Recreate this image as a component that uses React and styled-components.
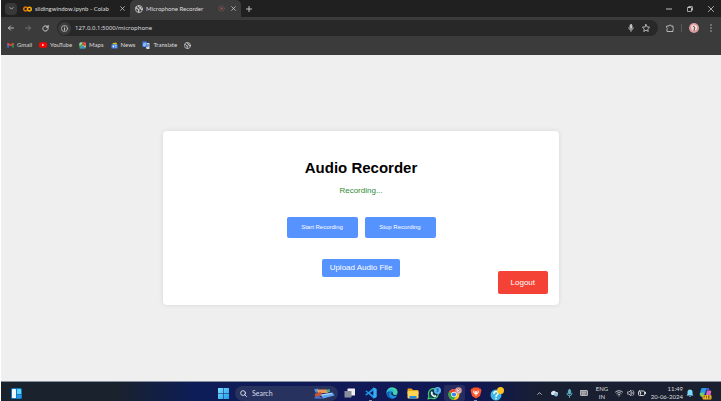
import React from "react";
import styled, { createGlobalStyle } from "styled-components";

const Global = createGlobalStyle`
  * { box-sizing: border-box; }
  body { margin: 0; background: #fff; }
  button, input { font: inherit; color: inherit; border: 0; padding: 0; margin: 0; background: none; }
  h1, p { margin: 0; }
  svg { display: block; flex: none; }
`;

const Screen = styled.div`
  min-height: 100vh;
  display: flex;
  flex-direction: column;
  border-left: 1px solid #fff;
  font-family: Lato, "Open Sans", sans-serif;
  font-size: 6px;
  line-height: 8px;
  color: #dcdcdc;
`;

const TabStrip = styled.header`
  display: flex;
  align-items: center;
  height: 17px;
  background: #202020;
`;

const IconButton = styled.button`
  display: flex;
  align-items: center;
  justify-content: center;
  flex: none;
  width: ${(p) => p.$w || 16}px;
  height: ${(p) => p.$h || 16}px;
  border-radius: ${(p) => p.$radius || 0}px;
  background: ${(p) => p.$bg || "transparent"};
`;

const TabSearch = styled(IconButton)`
  margin: 0 6px 0 4px;
`;

const Tab = styled.div`
  display: flex;
  align-items: center;
  gap: 3px;
  width: ${(p) => p.$w}px;
  height: 17px;
  padding: 0 3px 0 ${(p) => (p.$active ? 5 : 0)}px;
  border-radius: 5px 5px 0 0;
  background: ${(p) => (p.$active ? "#3b3b3b" : "transparent")};
`;

const TabTitle = styled.span`
  flex: 1;
  white-space: nowrap;
`;

const WindowControls = styled.div`
  display: flex;
  margin-left: auto;
`;

const Toolbar = styled.div`
  display: flex;
  align-items: center;
  height: 22px;
  padding: 0 2px;
  background: #3b3b3b;
`;

const AddressBar = styled.div`
  flex: 1;
  display: flex;
  align-items: center;
  height: 16px;
  margin: 0 4px 0 4px;
  padding: 0 5px 0 1px;
  border-radius: 8px;
  background: #282828;
`;

const AddressInput = styled.input`
  flex: 1;
  min-width: 0;
  margin-left: 4px;
  font-family: "Noto Sans", sans-serif;
  font-size: 6px;
  line-height: 10px;
  outline: none;
`;

const Separator = styled.span`
  width: 1px;
  height: 8px;
  margin: 0 3px;
  background: #5a5a5a;
`;

const Bookmarks = styled.nav`
  display: flex;
  align-items: flex-start;
  gap: 7px;
  height: 16px;
  padding: 2px 6px;
  background: #3b3b3b;
`;

const Bookmark = styled.a`
  display: flex;
  align-items: center;
  gap: 3px;
  height: 8px;
  color: inherit;
  text-decoration: none;
`;

const Page = styled.main`
  flex: 1;
  display: flex;
  align-items: center;
  justify-content: center;
  background: #efefef;
  font-family: "Liberation Sans", Arial, sans-serif;
`;

const Card = styled.section`
  position: relative;
  width: 55%;
  min-width: 260px;
  display: flex;
  flex-direction: column;
  align-items: center;
  padding: 28px 20px;
  border-radius: 4px;
  background: #fff;
  box-shadow: 0 0 5px rgba(0, 0, 0, 0.1);
`;

const Title = styled.h1`
  font-size: 15px;
  line-height: 18px;
  color: #000;
`;

const Status = styled.p`
  margin-top: 9px;
  font-size: 8px;
  line-height: 10px;
  color: #2c8a35;
`;

const RecordActions = styled.div`
  display: flex;
  gap: 7px;
  margin: 21px 0;
`;

const ActionButton = styled.button`
  padding: ${(p) => p.$pad};
  border-radius: 2px;
  font-size: 8px;
  line-height: 9px;
  color: #fff;
  background: ${(p) => (p.$danger ? "#f44236" : "#5793ff")};
`;

const RecordButton = styled(ActionButton)`
  width: 71px;
  padding: 6px 4px;
  font-size: 6px;
`;

const LogoutButton = styled(ActionButton)`
  position: absolute;
  right: 11px;
  bottom: 11px;
`;

const Taskbar = styled.footer`
  display: grid;
  grid-template-columns: 1fr auto 1fr;
  align-items: center;
  height: 20px;
  padding-top: 3px;
  border-top: 1px solid #8791a0;
  background: linear-gradient(90deg, #19222d 0%, #19222d 16%, #0d1d58 27%, #111958 50%, #101752 66%, #181f32 75%, #1b2030 100%);
`;

const Left = styled.div`
  padding-left: 7px;
`;

const Apps = styled.div`
  display: flex;
  align-items: center;
`;

const SearchBox = styled.label`
  display: flex;
  align-items: center;
  width: 103px;
  height: 15px;
  margin: 0 1px 0 4px;
  padding: 0 3px 0 5px;
  border-radius: 8px;
  background: #28325f;
`;

const SearchInput = styled.input`
  flex: 1;
  min-width: 0;
  margin-left: 5px;
  font-size: 7px;
  line-height: 9px;
  outline: none;
  &::placeholder { color: #d5d9e7; opacity: 1; }
`;

const AppButton = styled.button`
  display: flex;
  flex-direction: column;
  align-items: center;
  justify-content: center;
  width: ${(p) => p.$w || 21}px;
  height: 16px;
  padding-top: 2px;
  border-radius: 2px;
  background: ${(p) => (p.$active ? "#262c60" : "transparent")};
  &::after {
    content: "";
    width: ${(p) => (p.$active ? 7 : 3)}px;
    height: 1px;
    margin-top: 1px;
    background: ${(p) => (p.$active ? "#4cc2ff" : p.$running ? "#8e94ac" : "transparent")};
  }
`;

const Tray = styled.div`
  display: flex;
  align-items: center;
  justify-content: flex-end;
  padding-right: 6px;
`;

const Language = styled.button`
  width: 22px;
  text-align: center;
  line-height: 8px;
`;

const Clock = styled.button`
  width: 36px;
  text-align: right;
  line-height: 8px;
  white-space: nowrap;
`;

const TrayGroup = styled.div`
  display: flex;
`;

/* Icons */

function Icon({ size = 8, w, box = "0 0 16 16", stroke = "#d0d0d0", sw = 1.6, children }) {
  return (
    <svg width={w || size} height={size} viewBox={box} fill="none" stroke={stroke} strokeWidth={sw} strokeLinecap="round" strokeLinejoin="round" aria-hidden="true">
      {children}
    </svg>
  );
}

const CloseIcon = ({ size = 5 }) => <Icon size={size} sw={2.4}><path d="M2 2l12 12M14 2L2 14" /></Icon>;

const GlobeIcon = ({ size = 8 }) => (
  <Icon size={size}>
    <circle cx="8" cy="8" r="7" />
    <path d="M2 5l3 3 3 1-1 3 1 3M7 2l1 2 3 1-1 2 4 2" strokeWidth="2.2" />
  </Icon>
);

const ColabIcon = () => (
  <Icon size={6} w={9} box="0 0 24 16" sw={4}>
    <path d="M10 4a5 5 0 1 0 0 8" stroke="#e8710a" />
    <circle cx="17" cy="8" r="5" stroke="#f9ab00" />
  </Icon>
);

const MicIcon = ({ size = 8, color = "#c8c8c8" }) => (
  <Icon size={size} stroke={color}>
    <rect x="6" y="1" width="4" height="8" rx="2" fill={color} />
    <path d="M3.500 7.500a4.500 4.500 0 0 0 9 0M8 12v3" />
  </Icon>
);

const GmailIcon = () => (
  <Icon size={6} w={7} box="0 0 20 16" sw={4}>
    <path d="M3 14V4" stroke="#4285f4" />
    <path d="M17 14V4" stroke="#34a853" />
    <path d="M3 4l7 5 7-5" stroke="#ea4335" />
  </Icon>
);

const YouTubeIcon = () => (
  <Icon size={6} w={8} box="0 0 20 14" stroke="none">
    <rect width="20" height="14" rx="4" fill="#f00" />
    <path d="M8 4v6l5-3z" fill="#fff" />
  </Icon>
);

const MapsIcon = () => (
  <Icon size={7} stroke="none">
    <rect x="1" y="1" width="14" height="14" rx="2" fill="#34a853" />
    <path d="M1 15L15 1v12L9 8z" fill="#e8eaed" />
    <path d="M2 15l6-6 6 6z" fill="#4285f4" />
    <path d="M1 10l8-9H3L1 3z" fill="#a4d3ae" />
    <path d="M12 0a4 4 0 0 1 4 4c0 3-4 6-4 6S8 7 8 4a4 4 0 0 1 4-4z" fill="#ea4335" />
  </Icon>
);

const NewsIcon = () => (
  <Icon size={7} stroke="none">
    <path d="M3 3l9-2 1 5H3z" fill="#34a853" />
    <path d="M5 2h8v5H5z" fill="#fbbc04" />
    <rect x="1" y="5" width="14" height="10" rx="2" fill="#4285f4" />
    <path d="M4 8h3v4H4zM9 8h4v1H9zM9 11h4v1H9z" fill="#fff" />
  </Icon>
);

const TranslateIcon = () => (
  <Icon size={8} stroke="none">
    <path d="M6 4h9v12H9z" fill="#d5dae3" />
    <path d="M1 1h8l3 11H1z" fill="#4285f4" />
    <path d="M8 5.500H5a2 2 0 1 0 2 2H6" fill="none" stroke="#fff" strokeWidth="1.200" />
    <path d="M10 8h5M12.500 7c0 3 1 4 2 5" stroke="#60738e" strokeWidth="1.200" />
  </Icon>
);

const WidgetsIcon = () => (
  <Icon size={11} box="0 0 22 22" stroke="none">
    <rect width="22" height="22" rx="3" fill="#1279c4" />
    <rect x="2" y="2" width="8" height="18" rx="1" fill="#f2f7fb" />
    <rect x="12" y="2" width="8" height="10" rx="1" fill="#62d2fb" />
    <rect x="12" y="14" width="8" height="6" rx="1" fill="#2997e8" />
  </Icon>
);

const WindowsIcon = () => (
  <Icon size={11} box="0 0 22 22" stroke="none">
    <defs>
      <linearGradient id="win" x1="0" y1="0" x2="1" y2="1">
        <stop offset="0" stopColor="#7fdcff" />
        <stop offset="1" stopColor="#1a9cec" />
      </linearGradient>
    </defs>
    <path d="M0 0h10.500v10.500H0zM11.500 0H22v10.500H11.500zM0 11.500h10.500V22H0zM11.500 11.500H22V22H11.500z" fill="url(#win)" />
  </Icon>
);

const SearchArt = () => (
  <Icon size={11} w={22} box="0 0 44 22" stroke="none">
    <path d="M2 3l7-2 3 6-6 3z" fill="#4c92df" />
    <path d="M8 3h20l2 7H10z" fill="#ed9558" />
    <path d="M3 12l12-4 5 7-15 3z" fill="#c5523a" />
    <path d="M15 13l24-4 4 6-23 6z" fill="#62a4f1" />
    <path d="M18 14l19-3" stroke="#b4dcff" strokeWidth="2" />
    <path d="M2 19l9-3 9 5H4z" fill="#4875d7" />
    <path d="M27 4l6-2 1 6-6 1z" fill="#54a88d" />
  </Icon>
);

const TaskViewIcon = () => (
  <Icon size={11} box="0 0 22 22" stroke="none">
    <rect x="7" y="1" width="15" height="14" rx="1" fill="#f0f0f2" />
    <rect x="1" y="6" width="14" height="13" rx="1" fill="#8a8e9c" />
  </Icon>
);

const VSCodeIcon = () => (
  <Icon size={12} box="0 0 24 24" stroke="none">
    <path d="M17 1l6 3v16l-6 3L7 14l-4 3-2-1v-2l4-2-4-3V8l2-1 4 3zM17 7l-7 5 7 5z" fill="#1f94e0" fillRule="evenodd" />
    <path d="M17 1l6 3v16l-6 3z" fill="#3cacf3" />
  </Icon>
);

const EdgeIcon = () => (
  <Icon size={12} box="0 0 24 24" stroke="none">
    <circle cx="12" cy="12" r="11" fill="#1682d4" />
    <path d="M1 12C1 5 6 1 12 1c7 0 11 4 11 9 0 4-3 6-6 6-2 0-4-1-3-3 1-3-1-5-4-5-5 0-8 2-9 4z" fill="#41d6a2" />
    <path d="M1 12C2 5 7 3 11 4c5 1 5 5 4 7-1-2-3-3-5-3-4 0-8 2-9 4z" fill="#2cb6df" />
    <path d="M9 10c-4 4-2 11 4 13-6 0-12-4-12-10 1-4 6-5 8-3z" fill="#1263b4" />
    <path d="M10 10c-3 3 1 9 7 9 2 0 4-1 5-2-1 3-5 6-9 6-7-3-8-10-3-13z" fill="#1b93df" />
    <path d="M11 11c-2 3 2 7 7 7 2 0 4-1 4-2-4 1-7 0-8-2-1-1 0-2 0-3z" fill="#15245f" />
  </Icon>
);

const FolderIcon = () => (
  <Icon size={11} w={12} box="0 0 24 22" stroke="none">
    <path d="M1 3a2 2 0 0 1 2-2h6l3 3h9a2 2 0 0 1 2 2v6H1z" fill="#e9a519" />
    <rect x="1" y="6" width="22" height="15" rx="2" fill="#ffd454" />
    <path d="M5 21v-5h14v5z" fill="#258be0" />
  </Icon>
);

const WhatsAppIcon = () => (
  <Icon size={13} w={14} box="0 0 28 26" stroke="none">
    <path d="M2 24l2-6a10 10 0 1 1 4 4z" stroke="#3fd070" strokeWidth="2.400" fill="#15314f" />
    <path d="M8 10c1-2 2-2 3 0l1 2-1 2 4 3 2-1 2 2c0 2-3 3-5 2-4-1-8-6-6-10z" fill="#e2f4e9" />
    <circle cx="21" cy="7" r="7" fill="#55b8f5" />
    <path d="M19 4h4l-2 2.500c3 0 2 4-1.500 3" stroke="#173c68" strokeWidth="1.500" />
  </Icon>
);

const ChromeIcon = () => (
  <Icon size={13} w={14} box="0 0 28 26" stroke="none">
    <circle cx="12" cy="15" r="11" fill="#fbc116" />
    <path d="M12 15L2.500 9.500A11 11 0 0 1 22 10H12z" fill="#ea4335" />
    <path d="M12 15L2.500 9.500A11 11 0 0 0 11 26l6-9z" fill="#2da94f" />
    <circle cx="12" cy="15" r="5.500" fill="#fff" />
    <circle cx="12" cy="15" r="4.200" fill="#3e82f1" />
    <circle cx="21" cy="7" r="6.500" fill="#d79a9e" />
    <path d="M18 4l5 1 1 6-4 1-1-3z" fill="#f2e3df" />
    <path d="M20 4l3 3-2 3" stroke="#765057" strokeWidth="1.500" />
  </Icon>
);

const BraveIcon = () => (
  <Icon size={12} box="0 0 24 24" stroke="none">
    <path d="M7 1h10l2 2h2l2 4-1 3-2 8-8 5-8-5-2-8-1-3 2-4h2z" fill="#fb542b" />
    <path d="M7 7l4 1h2l4-1 1 3-3 4-3 4-3-4-3-4z" fill="#fff" />
    <path d="M7 8l4 1-1 3zM17 8l-4 1 1 3zM10 14h4l-2 2z" fill="#fb542b" />
  </Icon>
);

const HelpIcon = () => (
  <Icon size={14} box="0 0 28 28" stroke="none">
    <circle cx="12" cy="16" r="11" fill="#3bb6e6" />
    <path d="M8 13c0-6 9-5 8 0 0 3-4 3-4 6M12 23v.5" stroke="#fff" strokeWidth="3" />
    <circle cx="21" cy="7" r="7" fill="#ffc41f" />
  </Icon>
);

const CopilotIcon = () => (
  <Icon size={13} box="0 0 26 26" stroke="none">
    <path d="M7 2h9l-5 14H3c-2 0-2-2-1-4L4 5c1-2 1-3 3-3z" fill="#2b9be9" />
    <path d="M14 2h4c2 0 2 1 3 4h-6l-3 8z" fill="#3f5ed9" />
    <path d="M16 7h6c3 0 3 2 2 5l-2 7c-1 3-2 4-5 4h-5z" fill="#de62be" />
    <path d="M2 12l8-1-2 9c-4 0-7-2-6-8z" fill="#72cf61" />
    <rect x="7" y="16" width="18" height="9" rx="2" fill="#f6b928" />
    <path d="M10 22v-4h2M15 18v4M19 18h3M19 22h3M19 18v4" stroke="#6b4b18" strokeWidth="1.500" />
  </Icon>
);

const AvatarIcon = () => (
  <Icon size={10} box="0 0 20 20" stroke="none">
    <circle cx="10" cy="10" r="10" fill="#d99b9d" />
    <path d="M4 6l5-4 2 5-1 7-4 2z" fill="#f0d3ce" />
    <path d="M11 3l5 4-1 6-4 3 1-7z" fill="#fff2ed" />
    <path d="M9 7l3 2-2 6" stroke="#6e464b" strokeWidth="2" />
  </Icon>
);

const apps = [
  { name: "Task View", icon: <TaskViewIcon /> },
  { name: "Visual Studio Code", icon: <VSCodeIcon />, running: true },
  { name: "Edge", icon: <EdgeIcon /> },
  { name: "File Explorer", icon: <FolderIcon /> },
  { name: "WhatsApp", icon: <WhatsAppIcon /> },
  { name: "Chrome", icon: <ChromeIcon />, active: true },
  { name: "Brave", icon: <BraveIcon />, running: true },
  { name: "Get Help", icon: <HelpIcon /> },
];

const bookmarks = [
  { name: "Gmail", icon: <GmailIcon /> },
  { name: "YouTube", icon: <YouTubeIcon /> },
  { name: "Maps", icon: <MapsIcon /> },
  { name: "News", icon: <NewsIcon /> },
  { name: "Translate", icon: <TranslateIcon /> },
  { name: "", icon: <GlobeIcon size={7} /> },
];

export default function App() {
  return (
    <Screen>
      <Global />
      <TabStrip>
        <TabSearch $w={12} $h={12} $radius={4} $bg="#383838" aria-label="Search tabs">
          <Icon size={5} sw={2.5}><path d="M3 5l5 5 5-5" /></Icon>
        </TabSearch>
        <Tab $w={107}>
          <ColabIcon />
          <TabTitle>slidingwindow.ipynb - Colab</TabTitle>
          <IconButton $w={10} $h={10} aria-label="Close tab"><CloseIcon /></IconButton>
        </Tab>
        <Tab $w={111} $active>
          <GlobeIcon size={8} />
          <TabTitle>Microphone Recorder</TabTitle>
          <Icon size={7} stroke="#765252"><circle cx="8" cy="8" r="6.500" /><circle cx="8" cy="8" r="2.500" fill="#9a4c4c" /></Icon>
          <IconButton $w={10} $h={10} aria-label="Close tab"><CloseIcon /></IconButton>
        </Tab>
        <IconButton aria-label="New tab"><Icon size={6} sw={2.4}><path d="M8 1v14M1 8h14" /></Icon></IconButton>
        <WindowControls>
          <IconButton $w={21} aria-label="Minimize"><Icon size={6} sw={2.4}><path d="M1 8h14" /></Icon></IconButton>
          <IconButton $w={21} aria-label="Restore">
            <Icon size={6} sw={2.4}><rect x="1" y="4" width="11" height="11" rx="2" /><path d="M5 1h7a3 3 0 0 1 3 3v7" /></Icon>
          </IconButton>
          <IconButton $w={21} aria-label="Close"><Icon size={6} sw={2}><path d="M1 1l14 14M15 1L1 15" /></Icon></IconButton>
        </WindowControls>
      </TabStrip>

      <Toolbar>
        <IconButton aria-label="Back"><Icon size={6} sw={2.2}><path d="M15 8H1M7 2L1 8l6 6" /></Icon></IconButton>
        <IconButton $w={18} aria-label="Forward"><Icon size={6} sw={2.2} stroke="#7b7b7b"><path d="M1 8h14M9 2l6 6-6 6" /></Icon></IconButton>
        <IconButton aria-label="Reload"><Icon size={7} sw={2.2}><path d="M14 8a6 6 0 1 1-2-4.500L14 5M14 1v4h-4" /></Icon></IconButton>
        <AddressBar>
          <IconButton $w={13} $h={13} $radius={7} $bg="#3c3c3c" aria-label="Site information">
            <Icon size={7}><circle cx="8" cy="8" r="7" /><path d="M8 7.500V12M8 4.500v.1" strokeWidth="2" /></Icon>
          </IconButton>
          <AddressInput aria-label="Address" defaultValue="127.0.0.1:5000/microphone" />
          <IconButton aria-label="Microphone access"><MicIcon /></IconButton>
          <IconButton $w={14} aria-label="Bookmark this page">
            <Icon><path d="M8 1l2.200 4.800 5 .6-3.700 3.500 1 5L8 12.500 3.500 15l1-5L.8 6.400l5-.6z" /></Icon>
          </IconButton>
        </AddressBar>
        <IconButton aria-label="Extensions">
          <Icon><path d="M2 4h4a2 2 0 0 1 4 0h4v4a2 2 0 0 1 0 3v4H2v-4a2 2 0 0 0 0-3z" /></Icon>
        </IconButton>
        <Separator />
        <IconButton $w={18} aria-label="Profile"><AvatarIcon /></IconButton>
        <IconButton aria-label="Menu">
          <Icon sw={2.6}><path d="M8 2v.1M8 8v.1M8 14v.1" /></Icon>
        </IconButton>
      </Toolbar>

      <Bookmarks aria-label="Bookmarks">
        {bookmarks.map((b) => (
          <Bookmark key={b.name} href="#" aria-label={b.name || "Website"}>{b.icon}{b.name}</Bookmark>
        ))}
      </Bookmarks>

      <Page>
        <Card>
          <Title>Audio Recorder</Title>
          <Status role="status">Recording...</Status>
          <RecordActions>
            <RecordButton>Start Recording</RecordButton>
            <RecordButton>Stop Recording</RecordButton>
          </RecordActions>
          <ActionButton $pad="4px 8px 5px">Upload Audio File</ActionButton>
          <LogoutButton $danger $pad="7px 13px">Logout</LogoutButton>
        </Card>
      </Page>

      <Taskbar>
        <Left><IconButton aria-label="Widgets"><WidgetsIcon /></IconButton></Left>
        <Apps>
          <IconButton aria-label="Start"><WindowsIcon /></IconButton>
          <SearchBox>
            <Icon size={7} stroke="#e6e8f2" sw={2}><circle cx="7" cy="7" r="5.500" /><path d="M11 11l4 4" /></Icon>
            <SearchInput aria-label="Search" placeholder="Search" />
            <SearchArt />
          </SearchBox>
          {apps.map((a) => (
            <AppButton key={a.name} aria-label={a.name} $active={a.active} $running={a.running}>{a.icon}</AppButton>
          ))}
        </Apps>
        <Tray>
          <IconButton $w={14} aria-label="Hidden icons"><Icon size={5} sw={2.6}><path d="M2 11l6-6 6 6" /></Icon></IconButton>
          <IconButton aria-label="Cloud storage">
            <Icon size={8} stroke="none"><path d="M4 12a4 4 0 0 1 0-7 5 5 0 0 1 8 1 3 3 0 0 1 2 6z" fill="#dfe4ec" /><circle cx="12" cy="11" r="4" fill="#85b9dd" /></Icon>
          </IconButton>
          <IconButton $w={15} aria-label="Microphone"><MicIcon size={9} color="#5fb4c8" /></IconButton>
          <IconButton $w={14} aria-label="Keyboard">
            <Icon size={8}><rect x="1" y="3" width="14" height="10" rx="1" fill="#6f747d" /><path d="M4 6h8M4 8h8M5 10.500h6" strokeDasharray="1 2" /></Icon>
          </IconButton>
          <Language>ENG<br />IN</Language>
          <TrayGroup>
            <IconButton $w={12} aria-label="Wi-Fi">
              <Icon size={8} sw={1.8}><path d="M1 6a10 10 0 0 1 14 0M3.500 9a6 6 0 0 1 9 0M6 11.500a3 3 0 0 1 4 0M8 14v.1" /></Icon>
            </IconButton>
            <IconButton $w={11} aria-label="Volume">
              <Icon size={8}><path d="M1 6h3l4-4v12l-4-4H1zM10 6a3 3 0 0 1 0 4M12 3a7 7 0 0 1 0 10" /></Icon>
            </IconButton>
            <IconButton $w={11} aria-label="Battery">
              <Icon size={8} sw={2}><rect x="1" y="4" width="12" height="9" rx="2" /><path d="M5 7v3M15 7v2" strokeWidth="2.800" /></Icon>
            </IconButton>
          </TrayGroup>
          <Clock>11:49<br />20-06-2024</Clock>
          <IconButton $w={13} aria-label="Notifications">
            <Icon size={8} stroke="none"><path d="M8 1a5 5 0 0 1 5 5v4l2 3H1l2-3V6a5 5 0 0 1 5-5zM6 14h4l-2 2z" fill="#80d8f7" /></Icon>
          </IconButton>
          <IconButton $w={19} aria-label="Copilot"><CopilotIcon /></IconButton>
        </Tray>
      </Taskbar>
    </Screen>
  );
}
